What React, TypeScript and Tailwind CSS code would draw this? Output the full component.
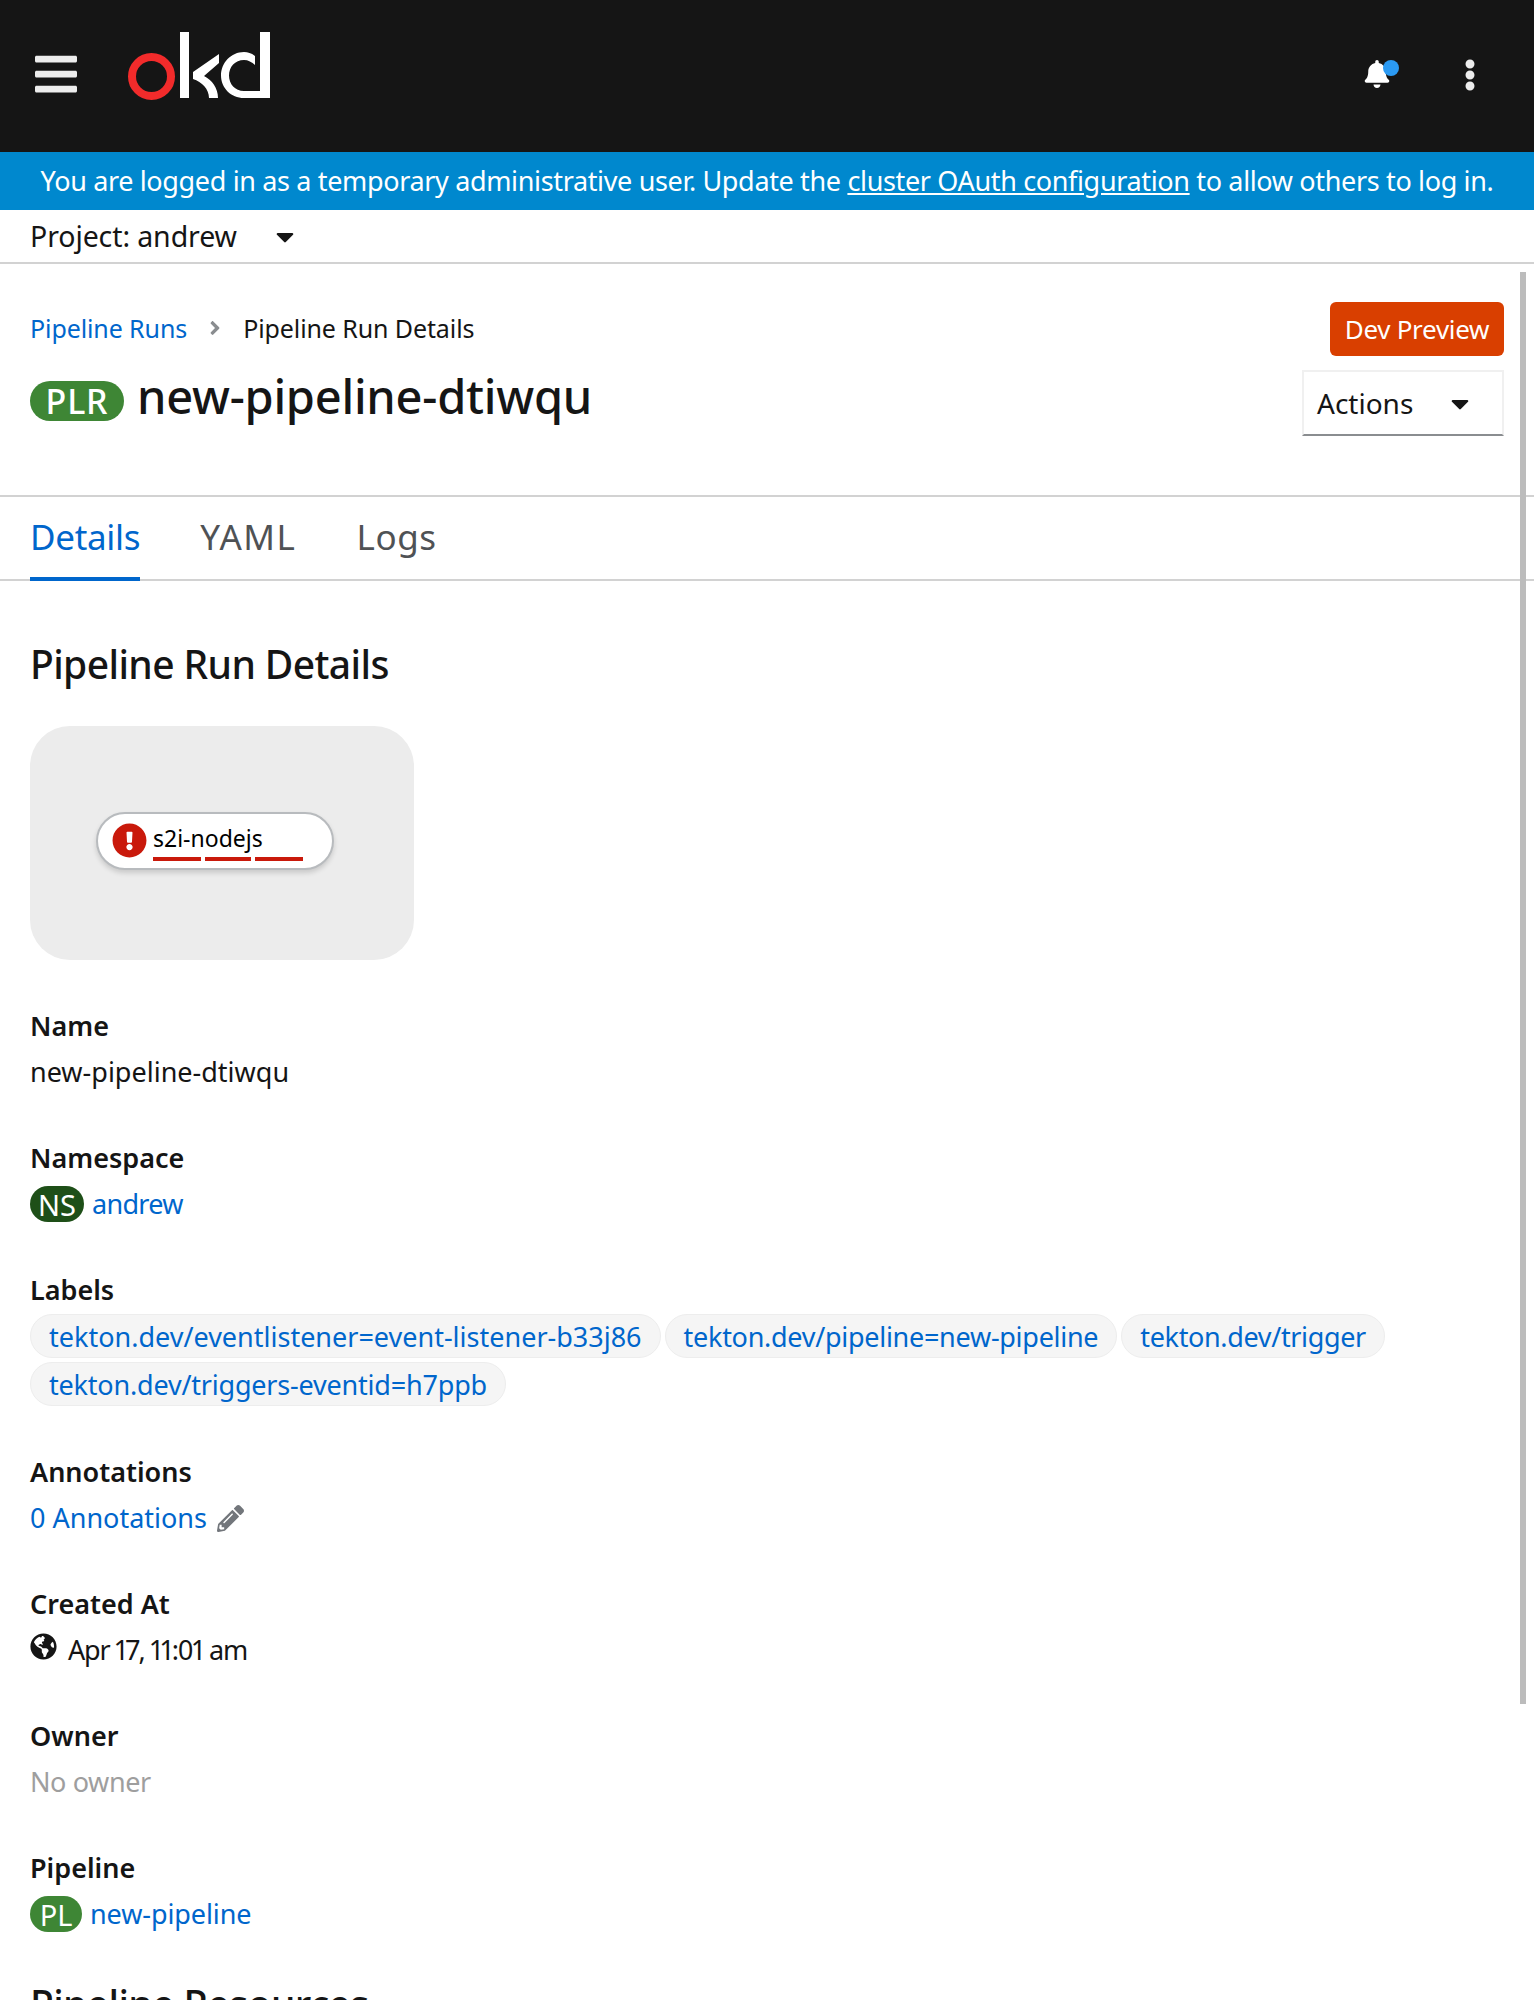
import { FaAngleRight, FaBars, FaBell, FaCaretDown, FaEllipsisV, FaExclamationCircle, FaGlobeAmericas, FaPencilAlt } from 'react-icons/fa';

function Logo() {
  return (
    <svg width="144" height="72" viewBox="0 0 144 72" className="block">
      <circle cx="24.5" cy="44.5" r="19.5" fill="none" stroke="#f22b2b" strokeWidth="8" />
      <path d="M53 0h9v66h-9z" fill="#fff" />
      <path d="M92 22 L66 40 L66 47 C75 50 82 57 82 66 L91 66 C91 56 85 48 77 44 L92 31 Z" fill="#fff" />
      <path d="M128 24 C124 21 121 20 117 20 C104 20 94 31 94 43.5 C94 56 104 66 117 66 L143 66 V59 L117 59 C108 59 102 52 102 43.5 C102 35 108 28 117 28 C121 28 125 30 128 33 Z" fill="#fff" />
      <path d="M133 0h10v66h-10z" fill="#fff" />
    </svg>
  );
}

function Field({ label, children }: { label: string; children: React.ReactNode }) {
  return (
    <div className="mb-[40px]">
      <div className="h-[46px] text-[27px] leading-[46px] font-semibold text-[#151515]">{label}</div>
      <div className="min-h-[46px] text-[27px] leading-[46px] text-[#151515]">{children}</div>
    </div>
  );
}

function ResourceBadge({ text, className }: { text: string; className: string }) {
  return (
    <span className={`inline-flex h-[36px] items-center justify-center rounded-[18px] text-[29px] leading-none text-white ${className}`}>
      {text}
    </span>
  );
}

function Chip({ text, tracking }: { text: string; tracking?: string }) {
  return (
    <span className={`inline-flex h-[44px] items-center rounded-[22px] border border-[#ededed] bg-[#f5f5f5] px-[18px] text-[27px] leading-none text-[#06c] ${tracking ?? ''}`}>
      {text}
    </span>
  );
}

export default function App() {
  return (
    <div className="relative h-[2000px] overflow-hidden bg-white font-['Noto_Sans',sans-serif] text-[#151515]">
      {/* Masthead */}
      <header className="flex h-[152px] items-center bg-[#151515] pr-[58px]">
        <FaBars className="ml-[35px] mt-[-4px] h-[48px] w-[42px] text-[#ededed]" />
        <div className="ml-[50px] mt-[-16px]">
          <Logo />
        </div>
        <div className="ml-auto flex items-center gap-[74px]">
          <div className="relative mt-[-4px]">
            <FaBell className="h-[28px] w-[26px] text-white" />
            <span className="absolute left-[19px] top-0 h-[16px] w-[16px] rounded-full bg-[#2b9af3]" />
          </div>
          <FaEllipsisV className="mt-[-3px] h-[36px] w-[12px] text-[#ededed]" />
        </div>
      </header>

      <div className="flex h-[58px] items-center justify-center bg-[#0088ce] text-[27px] tracking-[-0.35px] whitespace-nowrap text-white">
        <span>
          You are logged in as a temporary administrative user. Update the{' '}
          <span className="underline">cluster OAuth configuration</span> to allow others to log in.
        </span>
      </div>

      {/* Project bar */}
      <div className="flex h-[54px] items-center border-b-2 border-[#d2d2d2] pl-[30px] text-[28.5px] tracking-[-0.1px]">
        <span>Project: andrew</span>
        <FaCaretDown className="ml-[39px] h-[29px] w-[18px]" />
      </div>

      {/* Page heading */}
      <div className="relative h-[233px] border-b-2 border-[#d2d2d2] px-[30px]">
        <div className="flex items-center pt-[47px] text-[25px] leading-[34px] tracking-[-0.1px]">
          <span className="text-[#06c]">Pipeline Runs</span>
          <FaAngleRight className="mx-[20px] h-[22px] w-[16px] text-[#8a8d90]" />
          <span>Pipeline Run Details</span>
        </div>
        <div className="mt-[21px] flex items-center">
          <span className="inline-flex h-[40px] w-[94px] items-center justify-center rounded-[20px] bg-[#3e8635] text-[34px] leading-none font-medium tracking-[0.8px] text-white">
            PLR
          </span>
          <h1 className="mb-[10px] ml-[13px] text-[47px] leading-[60px] font-medium tracking-[-0.25px]">new-pipeline-dtiwqu</h1>
        </div>
        <div className="absolute top-[38px] right-[30px] flex flex-col items-end gap-[14px]">
          <span className="flex h-[54px] w-[174px] items-center justify-center rounded-[6px] bg-[#d93f00] text-[26px] tracking-[-0.3px] text-white">
            Dev Preview
          </span>
          <span className="flex h-[66px] w-[202px] items-center border-2 border-[#f0f0f0] border-b-[#8a8d90] pl-[13px] text-[28px]">
            Actions
            <FaCaretDown className="ml-[38px] h-[29px] w-[18px]" />
          </span>
        </div>
      </div>

      {/* Tabs */}
      <nav className="flex h-[84px] gap-[60px] border-b-2 border-[#d2d2d2] px-[30px] text-[35px]">
        <span className="h-[84px] border-b-4 border-[#06c] pt-[15px] leading-[50px] tracking-[-0.3px] text-[#06c]">Details</span>
        <span className="pt-[15px] leading-[50px] tracking-[1.5px] text-[#4f5255]">YAML</span>
        <span className="pt-[15px] leading-[50px] tracking-[0.6px] text-[#4f5255]">Logs</span>
      </nav>

      {/* Details */}
      <main className="px-[30px] pt-[56px]">
        <h2 className="text-[39px] leading-[54px] font-medium tracking-[-0.6px]">Pipeline Run Details</h2>
        <div className="mt-[35px] mb-[43px] flex h-[234px] w-[384px] items-start rounded-[40px] bg-[#ececec] pt-[86px] pl-[66px]">
          <div className="flex h-[58px] w-[238px] items-start rounded-[29px] border-2 border-[#b8bbbe] bg-white pt-[9px] pl-[14px] shadow-[0_3px_5px_rgba(0,0,0,0.15)]">
            <FaExclamationCircle className="h-[35px] w-[35px] shrink-0 text-[#c9190b]" />
            <div className="ml-[6px]">
              <div className="mb-[3px] text-[23px] leading-[31px] text-black">s2i-nodejs</div>
              <div className="flex gap-[4px]">
                <span className="h-[4px] w-[48px] bg-[#c9190b]" />
                <span className="h-[4px] w-[46px] bg-[#c9190b]" />
                <span className="h-[4px] w-[48px] bg-[#c9190b]" />
              </div>
            </div>
          </div>
        </div>

        <Field label="Name">new-pipeline-dtiwqu</Field>
        <Field label="Namespace">
          <span className="flex items-center">
            <ResourceBadge text="NS" className="w-[54px] bg-[#1e4f18]" />
            <span className="ml-[8px] tracking-[-0.7px] text-[#06c]">andrew</span>
          </span>
        </Field>
        <div className="mb-[43px]">
          <div className="h-[47px] text-[27px] leading-[46px] font-semibold">Labels</div>
          <div className="flex flex-wrap gap-x-[4px] gap-y-[4px]">
            <Chip text="tekton.dev/eventlistener=event-listener-b33j86" />
            <Chip text="tekton.dev/pipeline=new-pipeline" tracking="tracking-[-0.28px]" />
            <Chip text="tekton.dev/trigger" tracking="tracking-[-0.35px]" />
            <Chip text="tekton.dev/triggers-eventid=h7ppb" tracking="tracking-[-0.2px]" />
          </div>
        </div>
        <Field label="Annotations">
          <span className="flex items-center">
            <span className="text-[#06c]">0 Annotations</span>
            <FaPencilAlt className="ml-[10px] h-[27px] w-[27px] text-[#72767b]" />
          </span>
        </Field>
        <Field label="Created At">
          <span className="flex items-center">
            <FaGlobeAmericas className="mt-[-8px] h-[27px] w-[27px]" />
            <span className="ml-[11px] tracking-[-1.2px] proportional-nums">Apr 17, 11:01 am</span>
          </span>
        </Field>
        <Field label="Owner">
          <span className="tracking-[-0.4px] text-[#9e9e9e]">No owner</span>
        </Field>
        <Field label="Pipeline">
          <span className="flex items-center">
            <ResourceBadge text="PL" className="w-[52px] bg-[#3e8635]" />
            <span className="ml-[8px] tracking-[-0.1px] text-[#06c]">new-pipeline</span>
          </span>
        </Field>
        <h2 className="text-[39px] leading-[54px] font-medium tracking-[-0.6px]">Pipeline Resources</h2>
      </main>

      {/* Scrollbar */}
      <div className="absolute top-[272px] left-[1520px] h-[1432px] w-[6px] bg-[#bcbcbc]" />
    </div>
  );
}
